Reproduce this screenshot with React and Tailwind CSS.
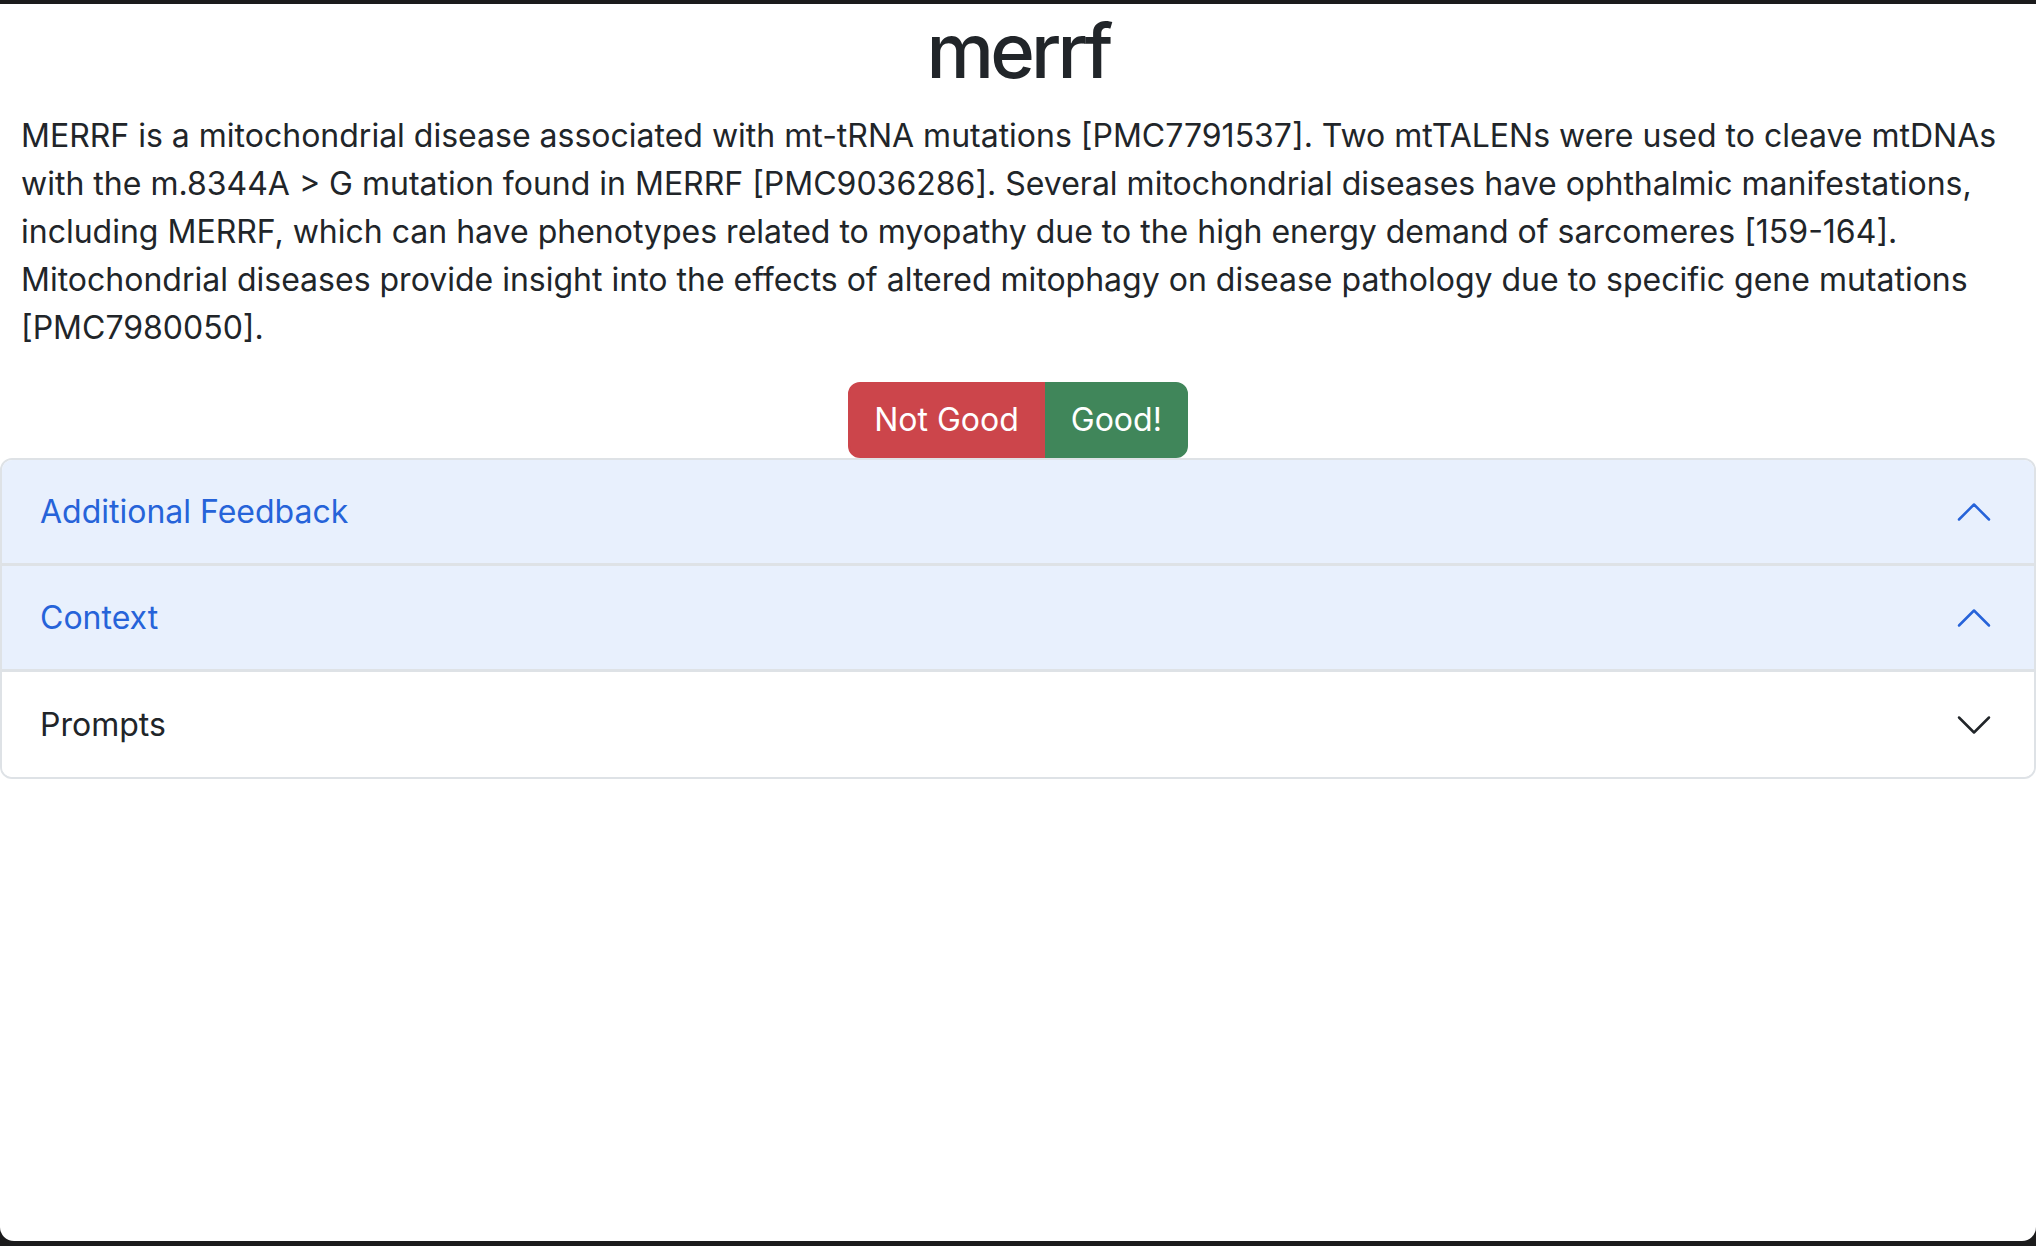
import React from "react";

const SUMMARY =
  "MERRF is a mitochondrial disease associated with mt-tRNA mutations [PMC7791537]. Two mtTALENs were used to cleave mtDNAs with the m.8344A > G mutation found in MERRF [PMC9036286]. Several mitochondrial diseases have ophthalmic manifestations, including MERRF, which can have phenotypes related to myopathy due to the high energy demand of sarcomeres [159-164]. Mitochondrial diseases provide insight into the effects of altered mitophagy on disease pathology due to specific gene mutations [PMC7980050].";

const sections = [
  { title: "Additional Feedback", open: true },
  { title: "Context", open: true },
  { title: "Prompts", open: false },
];

function Chevron({ open }) {
  return (
    <svg
      viewBox="0 0 16 16"
      className={`w-[40px] h-[40px] shrink-0 ${open ? "rotate-180" : ""}`}
      fill="none"
      stroke={open ? "#2663d9" : "#212529"}
      strokeWidth="1"
      strokeLinecap="round"
      strokeLinejoin="round"
    >
      <path d="M2 5L8 11L14 5" />
    </svg>
  );
}

export default function App() {
  return (
    <div className="h-[1246px] bg-[#1b1b1c] pt-[4px] pb-[5px] flex flex-col">
      <div className="flex-1 bg-white rounded-b-[14px] overflow-hidden font-['Inter',sans-serif] text-[#212529]">
        <h1 className="text-center text-[76px] font-medium tracking-[-0.05em] leading-[96px] -mt-[2px] mb-[14px]">
          merrf
        </h1>
        <p className="px-[21px] text-[32px] leading-[48px] mb-[30px]">{SUMMARY}</p>

        <div className="flex justify-center">
          <button className="bg-[#cc454b] border-2 border-[#cc454b] text-white text-[32px] leading-[48px] px-[24px] py-[12px] rounded-l-[12px]">
            Not Good
          </button>
          <button className="bg-[#40865a] border-2 border-[#40865a] text-white text-[32px] leading-[48px] px-[24px] py-[12px] rounded-r-[12px]">
            Good!
          </button>
        </div>

        <div className="border-2 border-[#dee2e6] rounded-[12px] overflow-hidden">
          {sections.map((s, i) => (
            <div
              key={s.title}
              className={`flex items-center justify-between pl-[38px] pr-[40px] ${
                s.open ? "bg-[#e8f0fd] text-[#2663d9]" : "bg-white text-[#212529]"
              } ${
                i < sections.length - 1
                  ? "h-[106px] border-b-[3px] border-[#dee2e6]"
                  : "h-[105px]"
              }`}
            >
              <span className="text-[32px] leading-[48px]">{s.title}</span>
              <Chevron open={s.open} />
            </div>
          ))}
        </div>
      </div>
    </div>
  );
}
